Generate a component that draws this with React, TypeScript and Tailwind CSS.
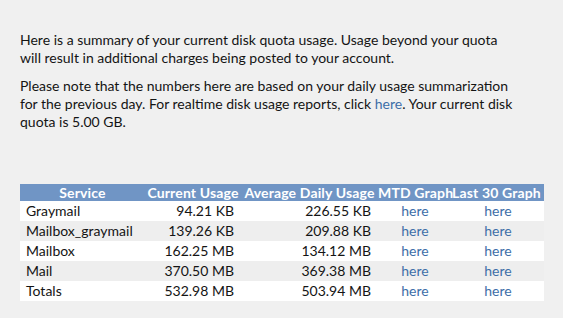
import React from "react";

const rows = [
  ["Graymail", "94.21 KB", "226.55 KB"],
  ["Mailbox_graymail", "139.26 KB", "209.88 KB"],
  ["Mailbox", "162.25 MB", "134.12 MB"],
  ["Mail", "370.50 MB", "369.38 MB"],
  ["Totals", "532.98 MB", "503.94 MB"],
];

export default function App() {
  return (
    <div
      className="w-[563px] h-[318px] bg-[#f0f0f0] text-[#141414] overflow-hidden"
      style={{ fontFamily: "Lato, 'Open Sans', sans-serif" }}
    >
      <div className="pl-[20px] pt-[31px] text-[14px] leading-[18px]">
        <p className="w-[524px]">
          Here is a summary of your current disk quota usage. Usage beyond your quota
          <br />
          will result in additional charges being posted to your account.
        </p>
        <p className="mt-[10px] w-[524px]">
          Please note that the numbers here are based on your daily usage summarization
          <br />
          for the previous day. For realtime disk usage reports, click{" "}
          <a className="text-[#3d6ea8]">here</a>. Your current disk
          <br />
          quota is 5.00 GB.
        </p>
        <div className="mt-[53px] w-[524px] overflow-hidden">
          <table className="table-fixed border-collapse w-[524px]">
            <colgroup>
              <col className="w-[125px]" />
              <col className="w-[96px]" />
              <col className="w-[137px]" />
              <col className="w-[74px]" />
              <col className="w-[92px]" />
            </colgroup>
            <thead>
              <tr className="bg-[#7095c5] text-white font-bold text-[14px] tracking-[0.15px] h-[17px] leading-[17px]">
                <th className="p-0 text-center whitespace-nowrap">Service</th>
                <th className="p-0 text-center whitespace-nowrap">Current Usage</th>
                <th className="p-0 text-center whitespace-nowrap">Average Daily Usage</th>
                <th className="p-0 text-center whitespace-nowrap">MTD Graph</th>
                <th className="p-0 text-left whitespace-nowrap overflow-hidden">Last 30 Graph</th>
              </tr>
            </thead>
            <tbody>
              {rows.map((r, i) => (
                <tr key={r[0]} className={`h-[20px] leading-[20px] ${i % 2 === 1 ? "bg-[#eeeeee]" : "bg-white"}`}>
                  <td className="pl-[6px] py-0 whitespace-nowrap">{r[0]}</td>
                  <td className="pr-[7px] py-0 text-right whitespace-nowrap">{r[1]}</td>
                  <td className="pr-[7px] py-0 text-right whitespace-nowrap">{r[2]}</td>
                  <td className="p-0 text-center text-[#3d6ea8]">here</td>
                  <td className="p-0 text-center text-[#3d6ea8]">here</td>
                </tr>
              ))}
            </tbody>
          </table>
        </div>
      </div>
    </div>
  );
}
